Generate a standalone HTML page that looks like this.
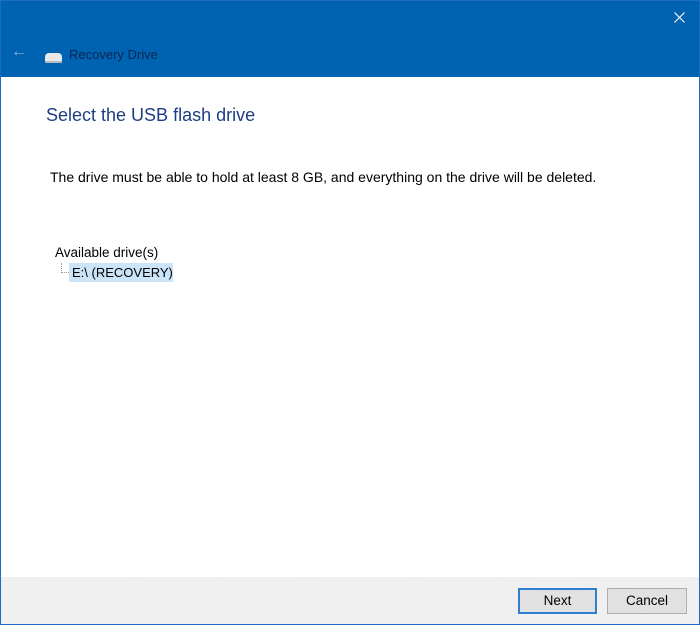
<!DOCTYPE html>
<html><head><style>
body{margin:0;width:700px;height:625px;overflow:hidden;font-family:"Liberation Sans",sans-serif;}
.win{position:absolute;left:0;top:0;width:698px;height:623px;border:1px solid #1a6dbf;background:#fff;}
.title{position:absolute;left:0;top:0;width:698px;height:76px;background:#0063b1;}
.x{position:absolute;left:673px;top:11px;}
.back{position:absolute;left:10px;top:42px;color:#8fb4dc;font-size:16px;}
.t{position:absolute;left:68px;top:46px;font-size:13px;color:#0c2650;}
.icon{position:absolute;left:44px;top:52px;width:17px;height:8px;background:#e8e8e8;border-radius:4px 4px 1px 1px;border-bottom:2px solid #bbb;}
h1{position:absolute;left:45px;top:104px;margin:0;font-weight:normal;font-size:18px;color:#1e3e84;}
.p{position:absolute;left:49px;top:168px;font-size:14px;color:#000;}
.av{position:absolute;left:54px;top:244px;font-size:13.5px;}
.line{position:absolute;left:60px;top:262px;width:7px;height:9px;border-left:1px dotted #999;border-bottom:1px dotted #999;}
.sel{position:absolute;left:68px;top:262px;width:104px;height:19px;background:#cce4f7;font-size:13px;line-height:19px;padding-left:3px;box-sizing:border-box;}
.foot{position:absolute;left:0;top:576px;width:698px;height:47px;background:repeating-linear-gradient(45deg,#f4f4f4 0 1px,#ececec 1px 2px);}
.btn{position:absolute;top:587px;height:26px;width:79px;box-sizing:border-box;background:#e1e1e1;border:1px solid #adadad;font-size:13.5px;text-align:center;line-height:24px;}
</style></head><body>
<div class="win">
<div class="title"><svg class="x" width="11" height="11" viewBox="0 0 11 11"><path d="M0.5 0.5L10.5 10.5M10.5 0.5L0.5 10.5" stroke="#fff" stroke-width="1.1"/></svg><div class="back">←</div><div class="icon"></div><div class="t">Recovery Drive</div></div>
<h1>Select the USB flash drive</h1>
<div class="p">The drive must be able to hold at least 8 GB, and everything on the drive will be deleted.</div>
<div class="av">Available drive(s)</div>
<div class="line"></div>
<div class="sel">E:\ (RECOVERY)</div>
<div class="foot"></div>
<div class="btn" style="left:517px;border:2px solid #2f7fcf;line-height:22px">Next</div>
<div class="btn" style="left:606px;width:80px">Cancel</div>
</div>
</body></html>
